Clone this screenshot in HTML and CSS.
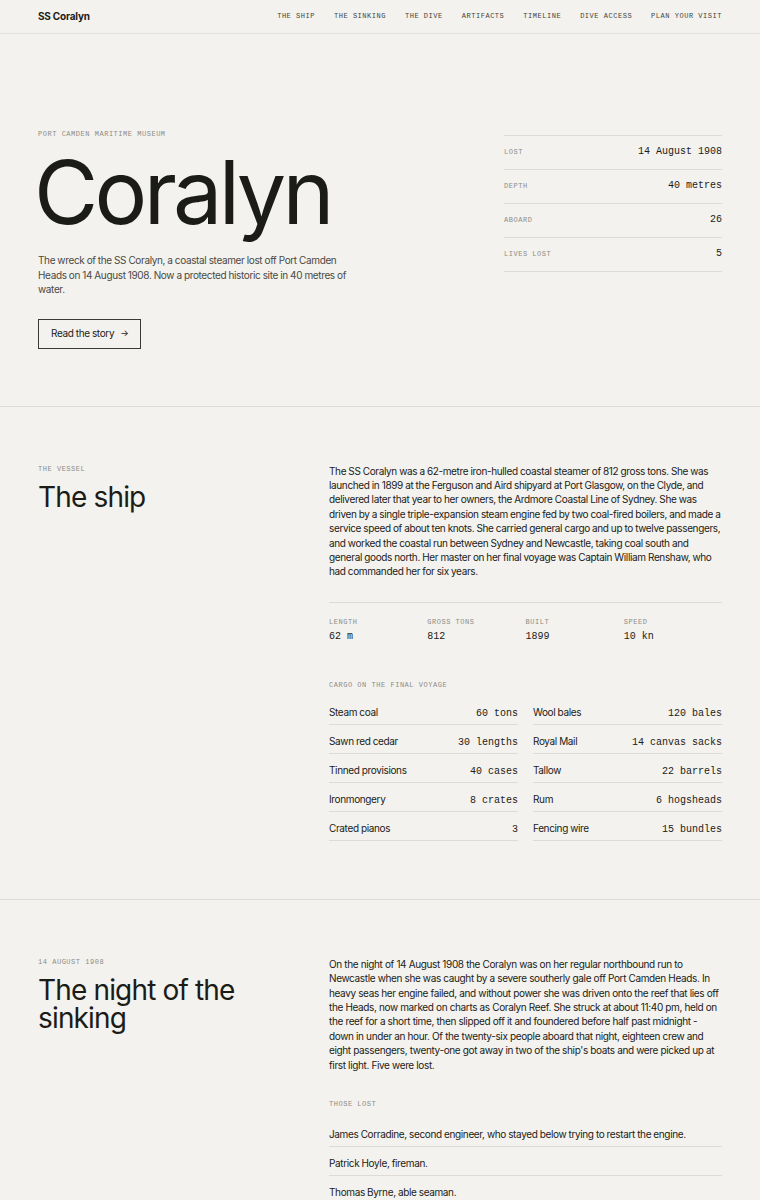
FILE: index.html
```html
<!DOCTYPE html>
<html lang="en">
<head>
    <meta charset="UTF-8">
    <meta name="viewport" content="width=device-width, initial-scale=1.0">
    <title>SS Coralyn</title>
    <link rel="stylesheet" href="styles.css">
</head>
<body>
    <header class="site-header">
        <a class="brand" href="#">SS Coralyn</a>
        <nav class="nav">
            <a href="#ship">The ship</a>
            <a href="#sinking">The sinking</a>
            <a href="#">The dive</a>
            <a href="#">Artifacts</a>
            <a href="#">Timeline</a>
            <a href="#">Dive access</a>
            <a href="#">Plan your visit</a>
        </nav>
    </header>

    <section class="hero">
        <div class="hero-main">
            <p class="eyebrow">Port Camden Maritime Museum</p>
            <h1 class="hero-title">Coralyn</h1>
            <p class="hero-lede">The wreck of the SS Coralyn, a coastal steamer lost off Port Camden Heads on 14 August 1908. Now a protected historic site in 40 metres of water.</p>
            <a class="btn" href="#ship">Read the story <span class="arrow">&rarr;</span></a>
        </div>
        <dl class="facts">
            <div class="fact"><dt>Lost</dt><dd>14 August 1908</dd></div>
            <div class="fact"><dt>Depth</dt><dd>40 metres</dd></div>
            <div class="fact"><dt>Aboard</dt><dd>26</dd></div>
            <div class="fact"><dt>Lives lost</dt><dd>5</dd></div>
        </dl>
    </section>

    <section class="chapter" id="ship">
        <div class="chapter-head">
            <p class="eyebrow">The vessel</p>
            <h2>The ship</h2>
        </div>
        <div class="chapter-body">
            <p>The SS Coralyn was a 62-metre iron-hulled coastal steamer of 812 gross tons. She was launched in 1899 at the Ferguson and Aird shipyard at Port Glasgow, on the Clyde, and delivered later that year to her owners, the Ardmore Coastal Line of Sydney. She was driven by a single triple-expansion steam engine fed by two coal-fired boilers, and made a service speed of about ten knots. She carried general cargo and up to twelve passengers, and worked the coastal run between Sydney and Newcastle, taking coal south and general goods north. Her master on her final voyage was Captain William Renshaw, who had commanded her for six years.</p>

            <dl class="specs">
                <div><dt>Length</dt><dd>62 m</dd></div>
                <div><dt>Gross tons</dt><dd>812</dd></div>
                <div><dt>Built</dt><dd>1899</dd></div>
                <div><dt>Speed</dt><dd>10 kn</dd></div>
            </dl>

            <p class="eyebrow">Cargo on the final voyage</p>
            <ul class="cargo">
                <li><span>Steam coal</span><span class="qty">60 tons</span></li>
                <li><span>Wool bales</span><span class="qty">120 bales</span></li>
                <li><span>Sawn red cedar</span><span class="qty">30 lengths</span></li>
                <li><span>Royal Mail</span><span class="qty">14 canvas sacks</span></li>
                <li><span>Tinned provisions</span><span class="qty">40 cases</span></li>
                <li><span>Tallow</span><span class="qty">22 barrels</span></li>
                <li><span>Ironmongery</span><span class="qty">8 crates</span></li>
                <li><span>Rum</span><span class="qty">6 hogsheads</span></li>
                <li><span>Crated pianos</span><span class="qty">3</span></li>
                <li><span>Fencing wire</span><span class="qty">15 bundles</span></li>
            </ul>
        </div>
    </section>

    <section class="chapter" id="sinking">
        <div class="chapter-head">
            <p class="eyebrow">14 August 1908</p>
            <h2>The night of the sinking</h2>
        </div>
        <div class="chapter-body">
            <p class="story">On the night of 14 August 1908 the Coralyn was on her regular northbound run to Newcastle when she was caught by a severe southerly gale off Port Camden Heads. In heavy seas her engine failed, and without power she was driven onto the reef that lies off the Heads, now marked on charts as Coralyn Reef. She struck at about 11:40 pm, held on the reef for a short time, then slipped off it and foundered before half past midnight - down in under an hour. Of the twenty-six people aboard that night, eighteen crew and eight passengers, twenty-one got away in two of the ship's boats and were picked up at first light. Five were lost.</p>

            <p class="eyebrow">Those lost</p>
            <ul class="lost">
                <li>James Corradine, second engineer, who stayed below trying to restart the engine.</li>
                <li>Patrick Hoyle, fireman.</li>
                <li>Thomas Byrne, able seaman.</li>
            </ul>
        </div>
    </section>
</body>
</html>
```

FILE: styles.css
```css
* {
    box-sizing: border-box;
}

body {
    margin: 0;
    background-color: #f3f2ee;
    color: #1b1b18;
    font-family: 'Inter', 'Noto Sans', sans-serif;
    font-size: 10px;
    line-height: 1.44;
    letter-spacing: -0.036em;
    word-spacing: -0.2px;
}

a {
    color: inherit;
    text-decoration: none;
}

p, h1, h2, dl, dd, ul {
    margin: 0;
    padding: 0;
}

ul {
    list-style: none;
}

/* small mono caps used for labels */
.eyebrow,
.fact dt,
.specs dt {
    font-family: 'Liberation Mono', monospace;
    font-size: 7px;
    line-height: 1.2;
    letter-spacing: 0.075em;
    word-spacing: 0;
    text-transform: uppercase;
    color: #8d8c86;
}

.fact dd,
.specs dd,
.qty {
    font-family: 'Liberation Mono', monospace;
    font-size: 10px;
    letter-spacing: 0;
    word-spacing: 0;
}

/* header */
.site-header {
    height: 34px;
    padding: 0 38px;
    display: flex;
    align-items: center;
    justify-content: space-between;
    border-bottom: 1px solid #e2e1dc;
}

.brand {
    font-weight: 700;
    font-size: 10px;
    letter-spacing: -0.02em;
    word-spacing: 0;
}

.nav {
    display: flex;
    gap: 19px;
}

.nav a {
    font-family: 'Liberation Mono', monospace;
    font-size: 7px;
    letter-spacing: 0.075em;
    word-spacing: 0;
    text-transform: uppercase;
    color: #45443f;
}

/* hero */
.hero {
    display: grid;
    grid-template-columns: 1fr 218px;
    gap: 60px;
    align-items: start;
    padding: 96px 38px 57px;
    border-bottom: 1px solid #dcdbd6;
}

.hero-title {
    font-weight: 400;
    font-size: 88px;
    line-height: 1;
    letter-spacing: -0.042em;
    margin: 10px 0 17px -4px;
}

.hero-lede {
    max-width: 312px;
    color: #4a4944;
}

.btn {
    display: inline-flex;
    align-items: center;
    gap: 6px;
    margin-top: 22px;
    height: 30px;
    padding: 0 12px;
    border: 1px solid #3a3935;
    font-size: 10px;
}

.arrow {
    font-size: 9px;
}

.facts {
    margin-top: 5px;
    border-top: 1px solid #dcdbd6;
}

.fact {
    display: flex;
    justify-content: space-between;
    align-items: center;
    height: 34px;
    border-bottom: 1px solid #dcdbd6;
}

/* chapters */
.chapter {
    display: grid;
    grid-template-columns: 1fr 393px;
    gap: 40px;
    padding: 57px 38px 58px;
    border-bottom: 1px solid #dcdbd6;
}

.chapter-head {
    padding-top: 1px;
}

.chapter-head h2 {
    font-weight: 400;
    font-size: 28px;
    line-height: 1;
    letter-spacing: -0.03em;
    word-spacing: 0;
    margin-top: 10px;
}

.story {
    word-spacing: 0;
}

.specs {
    display: grid;
    grid-template-columns: repeat(4, 1fr);
    margin: 23px 0 37px;
    padding-top: 15px;
    border-top: 1px solid #dcdbd6;
}

.specs dd {
    margin-top: 4px;
}

.cargo {
    display: grid;
    grid-template-columns: 1fr 1fr;
    column-gap: 15px;
    margin-top: 6px;
}

.cargo li,
.lost li {
    display: flex;
    justify-content: space-between;
    align-items: baseline;
    height: 29px;
    padding-top: 9px;
    line-height: 14px;
    border-bottom: 1px solid #dcdbd6;
}

#sinking .chapter-body > .eyebrow {
    margin-top: 28px;
}

.lost {
    margin-top: 10px;
}
```
